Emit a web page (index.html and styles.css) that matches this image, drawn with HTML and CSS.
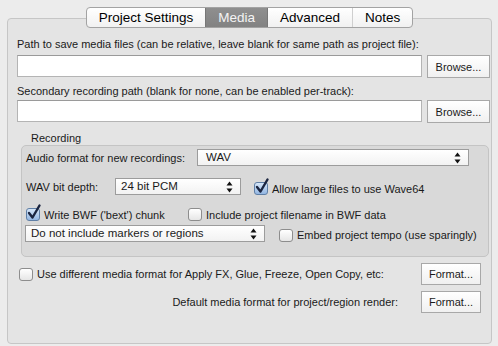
FILE: index.html
```html
<!DOCTYPE html>
<html lang="en">
<head>
    <meta charset="UTF-8">
    <title>Project Settings - Media</title>
    <link rel="stylesheet" href="styles.css">
</head>
<body>

    <div class="window">
        <nav class="tabs">
            <span class="tab">Project Settings</span>
            <span class="tab active">Media</span>
            <span class="tab">Advanced</span>
            <span class="tab">Notes</span>
        </nav>

        <div class="panel">
            <p class="label first">Path to save media files (can be relative, leave blank for same path as project file):</p>
            <div class="path-row first">
                <input type="text" class="field">
                <button type="button" class="btn browse">Browse...</button>
            </div>

            <p class="label second">Secondary recording path (blank for none, can be enabled per-track):</p>
            <div class="path-row">
                <input type="text" class="field">
                <button type="button" class="btn browse">Browse...</button>
            </div>

            <div class="group-title">Recording</div>
            <div class="group">
                <div class="grow audio-row">
                    <span class="glabel audio-label">Audio format for new recordings:</span>
                    <div class="select audio-select">WAV<span class="arrows"></span></div>
                </div>

                <div class="grow depth-row">
                    <span class="glabel depth-label">WAV bit depth:</span>
                    <div class="select depth-select">24 bit PCM<span class="arrows"></span></div>
                    <label class="check wave64"><span class="box checked"></span>Allow large files to use Wave64</label>
                </div>

                <div class="grow bwf-row">
                    <label class="check bwf"><span class="box checked"></span>Write BWF ('bext') chunk</label>
                    <label class="check"><span class="box"></span>Include project filename in BWF data</label>
                </div>

                <div class="grow markers-row">
                    <div class="select markers-select">Do not include markers or regions<span class="arrows"></span></div>
                    <label class="check"><span class="box"></span>Embed project tempo (use sparingly)</label>
                </div>
            </div>

            <div class="bottom-row">
                <label class="check"><span class="box"></span>Use different media format for Apply FX, Glue, Freeze, Open Copy, etc:</label>
                <button type="button" class="btn format">Format...</button>
            </div>
            <div class="bottom-row right">
                <span class="render-label">Default media format for project/region render:</span>
                <button type="button" class="btn format">Format...</button>
            </div>
        </div>
    </div>

    <script>
        // draw the little check marks and the up/down arrows of the popups
        const checkSvg = '<svg class="tick" width="16" height="18" viewBox="0 0 16 18"><path d="M3 10 L6.5 14.5 L13.5 2.5" fill="none" stroke="#1b2540" stroke-width="2.4" stroke-linecap="round" stroke-linejoin="round"/></svg>';
        const arrowSvg = '<svg width="7" height="12" viewBox="0 0 7 12"><path d="M3.5 0.5 L6.5 4.5 L0.5 4.5 Z M3.5 11.5 L6.5 7.5 L0.5 7.5 Z" fill="#111"/></svg>';

        document.querySelectorAll('.box.checked').forEach(function (box) {
            box.innerHTML = checkSvg;
        });
        document.querySelectorAll('.arrows').forEach(function (a) {
            a.innerHTML = arrowSvg;
        });
    </script>

</body>
</html>
```

FILE: styles.css
```css
body {
    font-family: 'Liberation Sans', Arial, sans-serif;
    font-size: 11px;
    background-color: #ececec;
    color: #1a1a1a;
    margin: 0;
}
.window {
    height: 346px;
    box-sizing: border-box;
    display: flex;
    flex-direction: column;
    padding: 7px 6px 2px 7px;
}
.tabs {
    position: relative;
    z-index: 1;
    display: flex;
    align-self: center;
    margin-bottom: -10px;
    height: 21px;
    border: 1px solid #a3a3a3;
    border-radius: 4px;
    background: linear-gradient(#ffffff, #f1f1f1);
    overflow: hidden;
    box-sizing: border-box;
}
.tab {
    font-size: 13.5px;
    color: #000;
    line-height: 19px;
    padding: 0 12px;
    border-left: 1px solid #cfcfcf;
}
.tab:first-child {
    border-left: none;
}
.tab.active {
    background: linear-gradient(#8f8f8f, #828282);
    color: #f4f4f4;
    border-left-color: #777;
    border-right: 1px solid #777;
}
.tab.active + .tab {
    border-left: none;
}
.panel {
    flex: 1;
    background-color: #e4e4e4;
    border: 1px solid #c6c6c6;
    border-radius: 4px;
    padding: 18px 1px 0 9px;
}
.label {
    margin: 0;
    line-height: 14px;
}
.label.first {
    margin-bottom: 4px;
}
.label.second {
    margin-bottom: 2px;
}
.path-row {
    display: flex;
    gap: 5px;
}
.path-row.first {
    margin-bottom: 6px;
}
.field {
    width: 405px;
    height: 22px;
    box-sizing: border-box;
    margin: 0;
    border: 1px solid #b4b4b4;
    border-top-color: #9a9a9a;
    background-color: #fff;
}
.btn {
    font-family: inherit;
    font-size: 11px;
    color: #1a1a1a;
    background: linear-gradient(#ffffff, #f0f0f0);
    border: 1px solid #a8a8a8;
    border-radius: 0;
    margin: 0;
    padding: 0;
}
.browse {
    width: 63px;
    height: 23px;
}
.group-title {
    line-height: 13px;
    margin: 9px 0 0 14px;
}
.group {
    margin: 0 1px 0 4px;
    background-color: #d9d9d9;
    border: 1px solid #c4c4c4;
    border-radius: 5px;
    padding: 3px 0 14px 4px;
}
.grow {
    display: flex;
    align-items: center;
}
.glabel {
    white-space: nowrap;
}
.audio-label {
    width: 171px;
}
.depth-label {
    width: 89px;
}
.depth-row {
    margin-top: 12px;
}
.bwf-row {
    margin-top: 11px;
    height: 17px;
}
.markers-row {
    margin-top: 2px;
    margin-left: -1px;
}
.select {
    position: relative;
    height: 17px;
    box-sizing: border-box;
    line-height: 15px;
    padding-left: 8px;
    background: linear-gradient(#ffffff, #f2f2f2);
    border: 1px solid #9c9c9c;
    font-size: 11.5px;
    white-space: nowrap;
}
.arrows {
    position: absolute;
    right: 7px;
    top: 2px;
    line-height: 0;
}
.audio-select {
    width: 272px;
}
.depth-select {
    width: 126px;
    padding-left: 5px;
}
.markers-select {
    width: 240px;
    padding-left: 5px;
}
.check {
    display: flex;
    align-items: center;
    gap: 4px;
    white-space: nowrap;
}
.wave64 {
    margin-left: 13px;
    margin-top: 4px;
}
.bwf {
    width: 162px;
}
.markers-row .check {
    margin-left: 14px;
    margin-top: 3px;
}
.box {
    position: relative;
    width: 14px;
    height: 13px;
    box-sizing: border-box;
    border: 1px solid #8d8d8d;
    border-radius: 3px;
    background: linear-gradient(#ffffff, #e6e6e6);
}
.box.checked {
    background: linear-gradient(#d6e6f8, #93b6e2);
    border-color: #5f7fa6;
}
.tick {
    position: absolute;
    left: -1px;
    top: -6px;
}
.bottom-row {
    display: flex;
    align-items: center;
    justify-content: space-between;
    margin: 6px 9px 0 2px;
}
.bottom-row.right {
    justify-content: flex-end;
    gap: 23px;
}
.format {
    width: 60px;
    height: 22px;
}
```
